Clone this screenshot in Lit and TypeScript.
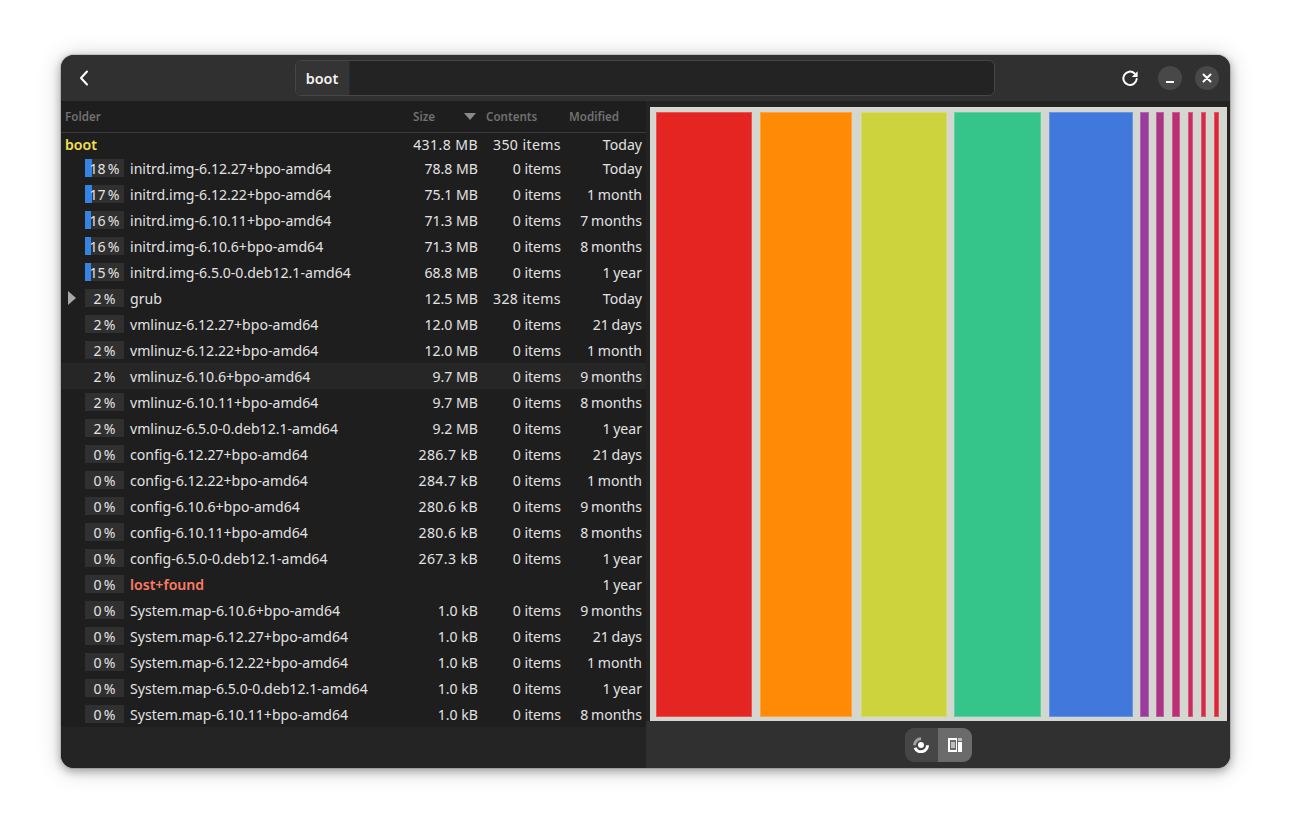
import { LitElement, html, css } from "lit";
import { customElement } from "lit/decorators.js";

type Row = { p: number; name: string; size: string; items: string; mod: string; cls?: string; arrow?: boolean; hover?: boolean };

const rows: Row[] = [
  { p: 18, name: "initrd.img-6.12.27+bpo-amd64", size: "78.8 MB", items: "0 items", mod: "Today" },
  { p: 17, name: "initrd.img-6.12.22+bpo-amd64", size: "75.1 MB", items: "0 items", mod: "1 month" },
  { p: 16, name: "initrd.img-6.10.11+bpo-amd64", size: "71.3 MB", items: "0 items", mod: "7 months" },
  { p: 16, name: "initrd.img-6.10.6+bpo-amd64", size: "71.3 MB", items: "0 items", mod: "8 months" },
  { p: 15, name: "initrd.img-6.5.0-0.deb12.1-amd64", size: "68.8 MB", items: "0 items", mod: "1 year" },
  { p: 2, name: "grub", size: "12.5 MB", items: "328 items", mod: "Today", arrow: true },
  { p: 2, name: "vmlinuz-6.12.27+bpo-amd64", size: "12.0 MB", items: "0 items", mod: "21 days" },
  { p: 2, name: "vmlinuz-6.12.22+bpo-amd64", size: "12.0 MB", items: "0 items", mod: "1 month" },
  { p: 2, name: "vmlinuz-6.10.6+bpo-amd64", size: "9.7 MB", items: "0 items", mod: "9 months", hover: true },
  { p: 2, name: "vmlinuz-6.10.11+bpo-amd64", size: "9.7 MB", items: "0 items", mod: "8 months" },
  { p: 2, name: "vmlinuz-6.5.0-0.deb12.1-amd64", size: "9.2 MB", items: "0 items", mod: "1 year" },
  { p: 0, name: "config-6.12.27+bpo-amd64", size: "286.7 kB", items: "0 items", mod: "21 days" },
  { p: 0, name: "config-6.12.22+bpo-amd64", size: "284.7 kB", items: "0 items", mod: "1 month" },
  { p: 0, name: "config-6.10.6+bpo-amd64", size: "280.6 kB", items: "0 items", mod: "9 months" },
  { p: 0, name: "config-6.10.11+bpo-amd64", size: "280.6 kB", items: "0 items", mod: "8 months" },
  { p: 0, name: "config-6.5.0-0.deb12.1-amd64", size: "267.3 kB", items: "0 items", mod: "1 year" },
  { p: 0, name: "lost+found", size: "", items: "", mod: "1 year", cls: "err" },
  { p: 0, name: "System.map-6.10.6+bpo-amd64", size: "1.0 kB", items: "0 items", mod: "9 months" },
  { p: 0, name: "System.map-6.12.27+bpo-amd64", size: "1.0 kB", items: "0 items", mod: "21 days" },
  { p: 0, name: "System.map-6.12.22+bpo-amd64", size: "1.0 kB", items: "0 items", mod: "1 month" },
  { p: 0, name: "System.map-6.5.0-0.deb12.1-amd64", size: "1.0 kB", items: "0 items", mod: "1 year" },
  { p: 0, name: "System.map-6.10.11+bpo-amd64", size: "1.0 kB", items: "0 items", mod: "8 months" },
];

// left gap, width, colour of each block of the treemap
const blocks: [number, number, string][] = [
  [6, 96, "#e52521"],
  [8, 92, "#ff8a05"],
  [9, 86, "#ccd33c"],
  [7, 87, "#35c58b"],
  [8, 84, "#4178dc"],
  [7, 9, "#9a3b9e"],
  [7, 8, "#a93584"],
  [8, 8, "#bb2f75"],
  [8, 5, "#c92c60"],
  [8, 5, "#d62a4c"],
  [8, 5, "#dd2638"],
];

const wide = (s: string, n: number) => (s.length === n ? "r wide" : "r");

@customElement("app-root")
export class AppRoot extends LitElement {
  static styles = css`
    :host { display: flex; justify-content: center; align-items: flex-start; width: 1291px; height: 835px; background: #fff; font-family: "Noto Sans", sans-serif; font-size: 14.1px; color: #e2e2e2; overflow: hidden; }
    .win { margin-top: 55px; width: 1169px; height: 713px; border-radius: 13px; overflow: hidden; background: #242424; display: flex; flex-direction: column; box-shadow: 0 3px 9px 1px rgba(0,0,0,.28), 0 2px 22px 3px rgba(0,0,0,.14), 0 0 0 1px rgba(0,0,0,.12); }
    .hb { height: 46px; flex: none; background: #303030; display: flex; align-items: center; padding: 0 11px 0 13px; box-sizing: border-box; }
    .back { width: 20px; height: 20px; display: flex; }
    .path { margin-left: 201px; width: 700px; height: 36px; border: 1px solid #464646; border-radius: 6px; background: #232323; display: flex; box-sizing: border-box; overflow: hidden; }
    .crumb { width: 54px; padding-right: 1px; box-sizing: border-box; background: #343434; color: #f2f2f2; font-weight: 600; font-size: 14.4px; display: flex; align-items: center; justify-content: center; border-right: 1px solid #2a2a2a; }
    .hb-right { margin-left: auto; display: flex; align-items: center; }
    .ref { width: 20px; height: 20px; margin-right: 5px; display: flex; }
    .wc { width: 24px; height: 24px; border-radius: 50%; background: #484848; display: flex; align-items: center; justify-content: center; margin-left: 13px; }
    .body { flex: 1; display: flex; min-height: 0; }
    .left { width: 585px; flex: none; display: flex; flex-direction: column; background: #242424; }
    .list { background: #1e1e1e; }
    .cols { height: 31px; display: grid; grid-template-columns: 352px 65px 83px 81px; align-items: center; border-bottom: 1px solid #3a3a3a; color: #707070; font-size: 11.6px; font-weight: 600; box-sizing: content-box; }
    .cols > div { white-space: nowrap; }
    .c-f { padding-left: 4px; }
    .c-s { display: flex; justify-content: space-between; align-items: center; padding-right: 2px; }
    .c-c, .c-m { padding-left: 8px; }
    .tri { width: 12px; height: 7px; display: block; }
    .row { height: 26px; display: grid; grid-template-columns: 352px 65px 83px 81px; align-items: center; white-space: nowrap; }
    .row.top { height: 22px; }
    .row.hover { background: #262626; }
    .name { display: flex; align-items: center; position: relative; padding-left: 24px; }
    .root { padding-left: 4px; color: #f5e04f; font-weight: 600; }
    .arrow { position: absolute; left: 7px; top: 50%; margin-top: -7px; width: 8px; height: 14px; }
    .pct { position: relative; width: 39px; height: 18px; background: #303030; margin-right: 6px; flex: none; }
    .hover .pct { background: transparent; }
    .fill { position: absolute; left: 0; top: 0; bottom: 0; background: #3584e4; }
    .pct span { position: absolute; inset: 0; text-align: center; line-height: 20px; }
    .err { color: #ff7b63; font-weight: 600; }
    .r { text-align: right; }
    .wide { letter-spacing: .4px; }
    .mod { word-spacing: -1px; }
    .foot { flex: 1; }
    .right { flex: 1; background: #303030; display: flex; flex-direction: column; min-width: 0; box-shadow: inset 1px 0 #2e2e2e; }
    .mapwrap { background: #232323; padding: 6px 3px 0 4px; }
    .map { height: 614px; background: #d3d7cf; display: flex; align-items: stretch; padding: 4px 0 4px; box-sizing: border-box; border-top: 1px solid #dcdcd8; }
    .blk { flex: none; box-shadow: inset 0 0 0 1px rgba(255,255,255,.22); }
    .switch { flex: 1; display: flex; align-items: center; justify-content: center; }
    .seg { display: flex; height: 34px; border-radius: 9px; overflow: hidden; margin-top: 1px; }
    .seg div { width: 33px; display: flex; align-items: center; justify-content: center; background: #464646; }
    .seg div.on { width: 34px; background: #6b6b6b; }
  `;

  render() {
    return html`
      <div class="win">
        <div class="hb">
          <div class="back">
            <svg viewBox="0 0 20 20" width="20" height="20"><path d="M13 3.5 L7 10 L13 16.5" fill="none" stroke="#fff" stroke-width="2" stroke-linecap="round" stroke-linejoin="round"/></svg>
          </div>
          <div class="path"><div class="crumb">boot</div></div>
          <div class="hb-right">
            <div class="ref">
              <svg viewBox="0 0 20 20" width="20" height="20"><path d="M16.7 11 A6.7 6.7 0 1 1 14.6 5.4" fill="none" stroke="#fff" stroke-width="2" stroke-linecap="round"/><path d="M17.6 3.2 V9 H11.8 Z" fill="#fff"/></svg>
            </div>
            <div class="wc"><svg viewBox="0 0 24 24" width="24" height="24"><rect x="8" y="15" width="8" height="2" fill="#fff"/></svg></div>
            <div class="wc"><svg viewBox="0 0 24 24" width="24" height="24"><path d="M8.5 8.5 L15.5 15.5 M15.5 8.5 L8.5 15.5" stroke="#fff" stroke-width="2" stroke-linecap="round"/></svg></div>
          </div>
        </div>
        <div class="body">
          <div class="left">
            <div class="list">
              <div class="cols">
                <div class="c-f">Folder</div>
                <div class="c-s"><span>Size</span><svg class="tri" viewBox="0 0 12 7"><path d="M0 0 H12 L6 7 Z" fill="#8a8a8a"/></svg></div>
                <div class="c-c">Contents</div>
                <div class="c-m">Modified</div>
              </div>
              <div class="row top">
                <div class="root">boot</div>
                <div class="r wide">431.8 MB</div>
                <div class="r wide">350 items</div>
                <div class="r">Today</div>
              </div>
              ${rows.map(
                (r) => html`
                  <div class="row ${r.hover ? "hover" : ""}">
                    <div class="name">
                      ${r.arrow ? html`<svg class="arrow" viewBox="0 0 8 14"><path d="M0 0 L8 7 L0 14 Z" fill="#a8a8a8"/></svg>` : ""}
                      <div class="pct">
                        ${r.p >= 5 ? html`<div class="fill" style="width:${r.p * 0.39}px"></div>` : ""}
                        <span>${r.p}\u2009%</span>
                      </div>
                      <span class="${r.cls ?? ""}">${r.name}</span>
                    </div>
                    <div class="${wide(r.size, 8)}">${r.size}</div>
                    <div class="${wide(r.items, 9)}">${r.items}</div>
                    <div class="r mod">${r.mod}</div>
                  </div>
                `
              )}
            </div>
            <div class="foot"></div>
          </div>
          <div class="right">
            <div class="mapwrap">
              <div class="map">
                ${blocks.map(
                  ([m, w, c]) => html`<div class="blk" style="margin-left:${m}px;width:${w}px;background:${c}"></div>`
                )}
              </div>
            </div>
            <div class="switch">
              <div class="seg">
                <div>
                  <svg viewBox="0 0 16 16" width="16" height="16">
                    <path d="M0 8.3 A8 8 0 0 1 8 0.3 V3.3 A5 5 0 0 0 3 8.3 Z" fill="#a0a0a0"/>
                    <path d="M16 8.3 A8 8 0 0 1 0.6 11.3 L3.4 10.2 A5 5 0 0 0 13 8.3 Z" fill="#fff"/>
                    <circle cx="8" cy="8" r="3" fill="#fff"/>
                  </svg>
                </div>
                <div class="on">
                  <svg viewBox="0 0 16 16" width="16" height="16">
                    <path d="M1 1 H10 V15 H1 Z M3 3 V13 H9 V3 Z" fill="#fff" fill-rule="evenodd"/>
                    <rect x="4" y="5" width="4" height="6" fill="#bdbdbd"/>
                    <rect x="11" y="1" width="4" height="3" fill="#bdbdbd"/>
                    <rect x="11" y="5" width="4" height="10" fill="#fff"/>
                  </svg>
                </div>
              </div>
            </div>
          </div>
        </div>
      </div>
    `;
  }
}
